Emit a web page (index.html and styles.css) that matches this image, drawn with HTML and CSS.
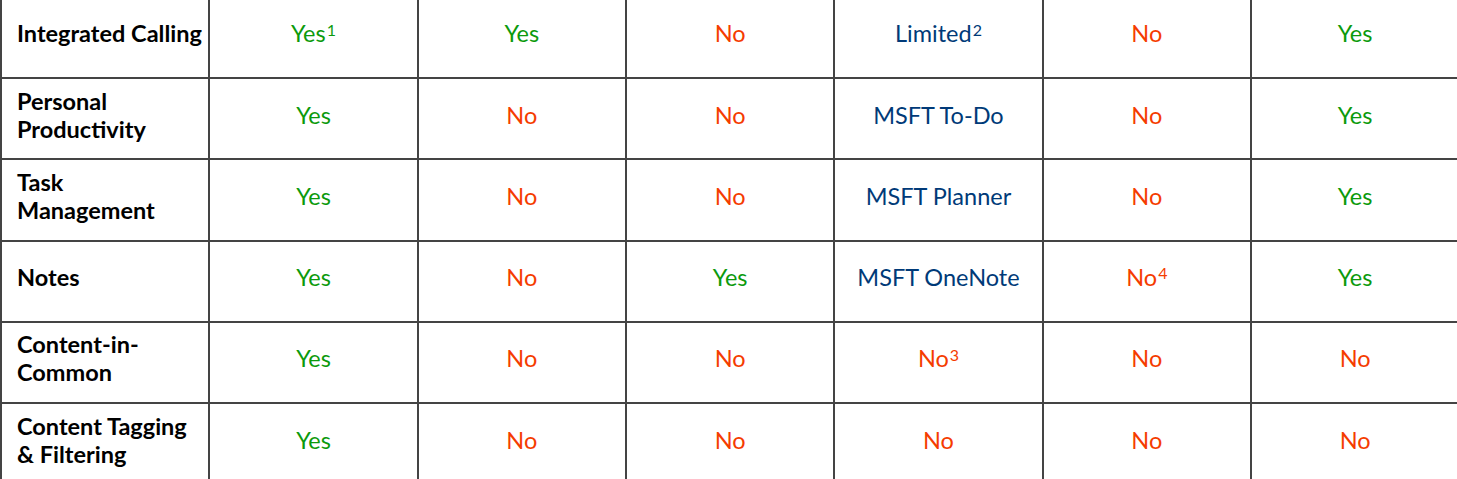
FILE: index.html
```html
<!DOCTYPE html>
<html lang="en">
<head>
<meta charset="utf-8">
<title>Feature comparison</title>
<link rel="stylesheet" href="styles.css">
</head>
<body>
<div class="wrap">
<table class="cmp">
  <tbody>
    <tr>
      <th>Integrated Calling</th>
      <td class="yes">Yes<sup>1</sup></td>
      <td class="yes">Yes</td>
      <td class="no">No</td>
      <td class="ms">Limited<sup>2</sup></td>
      <td class="no">No</td>
      <td class="yes">Yes</td>
    </tr>
    <tr>
      <th>Personal<br>Productivity</th>
      <td class="yes">Yes</td>
      <td class="no">No</td>
      <td class="no">No</td>
      <td class="ms">MSFT To-Do</td>
      <td class="no">No</td>
      <td class="yes">Yes</td>
    </tr>
    <tr>
      <th>Task<br>Management</th>
      <td class="yes">Yes</td>
      <td class="no">No</td>
      <td class="no">No</td>
      <td class="ms">MSFT Planner</td>
      <td class="no">No</td>
      <td class="yes">Yes</td>
    </tr>
    <tr>
      <th>Notes</th>
      <td class="yes">Yes</td>
      <td class="no">No</td>
      <td class="yes">Yes</td>
      <td class="ms">MSFT OneNote</td>
      <td class="no">No<sup>4</sup></td>
      <td class="yes">Yes</td>
    </tr>
    <tr>
      <th>Content-in-<br>Common</th>
      <td class="yes">Yes</td>
      <td class="no">No</td>
      <td class="no">No</td>
      <td class="no">No<sup>3</sup></td>
      <td class="no">No</td>
      <td class="no">No</td>
    </tr>
    <tr>
      <th>Content Tagging<br>&amp; Filtering</th>
      <td class="yes">Yes</td>
      <td class="no">No</td>
      <td class="no">No</td>
      <td class="no">No</td>
      <td class="no">No</td>
      <td class="no">No</td>
    </tr>
  </tbody>
</table>
</div>
</body>
</html>
```

FILE: styles.css
```css
html, body {
  margin: 0;
  padding: 0;
  background: #ffffff;
  overflow: hidden;
}

.wrap {
  width: 1457px;
  height: 479px;
  overflow: hidden;
}

.cmp {
  margin-top: -4.25px;
  width: 1460.3px;
  table-layout: fixed;
  border-collapse: separate;
  border-spacing: 0;
  border-left: 2px solid #444444;
  border-top: 2px solid #444444;
  font-family: Lato, "Liberation Sans", sans-serif;
  font-size: 23.5px;
}

.cmp tr {
  height: 81.25px;
}

.cmp th,
.cmp td {
  border-right: 2px solid #444444;
  border-bottom: 2px solid #444444;
  padding: 0 8px 8px;
  vertical-align: middle;
  line-height: 28px;
}

.cmp th {
  text-align: left;
  padding-left: 15px;
  padding-right: 0;
  white-space: nowrap;
  font-weight: 700;
  color: #000000;
}

.cmp td {
  text-align: center;
  font-weight: 400;
}

.yes { color: #0c9a0c; }
.no { color: #f53c00; }
.ms { color: #003a78; }

.cmp sup {
  font-size: 0.68em;
  vertical-align: 0.42em;
  line-height: 0;
  margin-left: 1px;
}
```
